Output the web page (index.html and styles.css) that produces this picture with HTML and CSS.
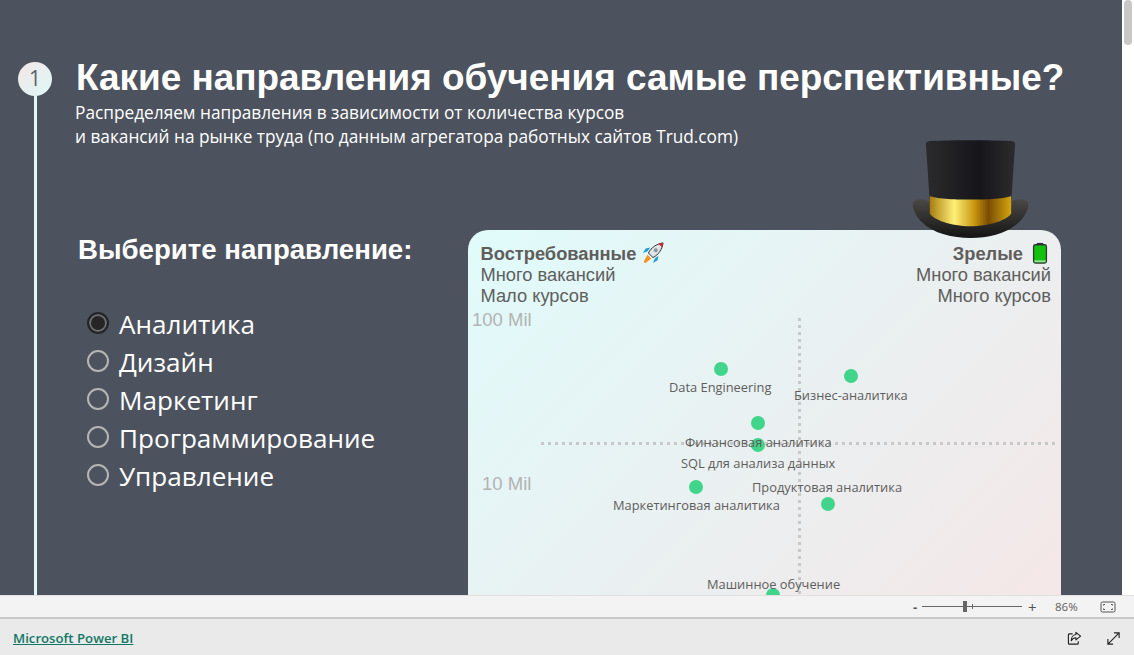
FILE: index.html
```html
<!DOCTYPE html>
<html lang="ru">
<head>
    <meta charset="UTF-8">
    <meta name="viewport" content="width=device-width, initial-scale=1.0">
    <title>Microsoft Power BI</title>
    <link rel="stylesheet" href="styles.css">
</head>
<body>
    <div class="report">
        <main class="page">
            <div class="timeline">
                <div class="step">1</div>
                <div class="step-line"></div>
            </div>
            <div class="content">
                <h1 class="title">Какие направления обучения самые перспективные?</h1>
                <p class="subtitle">Распределяем направления в зависимости от количества курсов<br>и вакансий на рынке труда (по данным агрегатора работных сайтов Trud.com)</p>
                <div class="columns">
                    <section class="filter">
                        <h2 class="filter-title">Выберите направление:</h2>
                        <ul class="choices">
                            <li class="choice"><span class="radio radio-on"></span>Аналитика</li>
                            <li class="choice"><span class="radio"></span>Дизайн</li>
                            <li class="choice"><span class="radio"></span>Маркетинг</li>
                            <li class="choice"><span class="radio"></span>Программирование</li>
                            <li class="choice"><span class="radio"></span>Управление</li>
                        </ul>
                    </section>
                    <section class="chart">
                        <svg class="hat" viewBox="0 0 120 102" preserveAspectRatio="none" aria-hidden="true">
                            <defs>
                                <linearGradient id="crown" x1="0" x2="1" y1="0" y2="0">
                                    <stop offset="0" stop-color="#2b2b2d"/>
                                    <stop offset="0.6" stop-color="#15151a"/>
                                    <stop offset="1" stop-color="#2c2c2e"/>
                                </linearGradient>
                                <linearGradient id="brim" x1="0" x2="0" y1="0" y2="1">
                                    <stop offset="0" stop-color="#4a4946"/>
                                    <stop offset="1" stop-color="#141414"/>
                                </linearGradient>
                                <linearGradient id="band" x1="0" x2="1" y1="0" y2="0">
                                    <stop offset="0" stop-color="#a87c10"/>
                                    <stop offset="0.3" stop-color="#fdf077"/>
                                    <stop offset="0.55" stop-color="#c8950f"/>
                                    <stop offset="0.72" stop-color="#7a4c04"/>
                                    <stop offset="1" stop-color="#d4a50f"/>
                                </linearGradient>
                            </defs>
                            <path fill="url(#brim)" d="M3 62c5-3 14-2 19 3 10 6 66 6 76 0 5-5 14-6 19-3 3 3 1 12-7 21-13 13-32 17-50 17s-37-4-50-17C2 74 0 65 3 62z"/>
                            <path fill="url(#crown)" d="M15 4c0-2 2-3 4-3 22-1 60-1 82 0 2 0 4 1 4 3l-4 60c-10 8-72 8-82 0z"/>
                            <path fill="url(#band)" d="M19 57c10 5 72 5 82 0l0 18c-3 6-21 13-41 13S22 81 19 75z"/>
                        </svg>
                        <div class="quadrant-row">
                            <div class="quadrant">
                                <strong class="quadrant-name">Востребованные
                                    <svg class="emoji" viewBox="0 0 24 24" aria-hidden="true">
                                        <path fill="#f7931e" d="M6 14l4 4-6 5c-1 0-2-1-2-2z"/>
                                        <path fill="#1d9bd8" d="M6 10l-5 2 3-5 5-1zM14 18l-2 5 5-3 1-5z"/>
                                        <path fill="#dfe6ea" stroke="#222" stroke-width="1" d="M7 12C10 6 16 2 23 1c-1 7-5 13-11 16z"/>
                                        <path fill="#d8232a" d="M18 2l5-1-1 5z"/>
                                        <circle cx="15" cy="9" r="2.2" fill="#8a979e"/>
                                    </svg>
                                </strong>
                                <span>Много вакансий</span>
                                <span>Мало курсов</span>
                            </div>
                            <div class="quadrant quadrant-right">
                                <strong class="quadrant-name">Зрелые
                                    <svg class="emoji" viewBox="0 0 24 24" aria-hidden="true">
                                        <rect x="8.500" y="1" width="7" height="3" fill="#333"/>
                                        <rect x="5" y="3" width="14" height="20" rx="2" fill="#13c20f" stroke="#333" stroke-width="1.4"/>
                                        <rect x="6" y="20" width="12" height="2" fill="#9adf98"/>
                                    </svg>
                                </strong>
                                <span>Много вакансий</span>
                                <span>Много курсов</span>
                            </div>
                        </div>

                        <span class="axis-label axis-top">100 Mil</span>
                        <span class="axis-label axis-mid">10 Mil</span>
                        <div class="guide guide-v"></div>
                        <div class="guide guide-h"></div>

                        <span class="dot dot-1"></span>
                        <span class="dot dot-2"></span>
                        <span class="dot dot-3"></span>
                        <span class="dot dot-4"></span>
                        <span class="dot dot-5"></span>
                        <span class="dot dot-6"></span>
                        <span class="dot dot-7"></span>

                        <span class="dot-label label-1">Data Engineering</span>
                        <span class="dot-label label-2">Бизнес-аналитика</span>
                        <span class="dot-label label-3">Финансовая аналитика</span>
                        <span class="dot-label label-4">SQL для анализа данных</span>
                        <span class="dot-label label-5">Продуктовая аналитика</span>
                        <span class="dot-label label-6">Маркетинговая аналитика</span>
                        <span class="dot-label label-7">Машинное обучение</span>
                    </section>
                </div>
            </div>
        </main>
        <div class="scrollbar"><div class="scroll-thumb"></div></div>
    </div>

    <div class="zoombar">
        <span class="zoom-sign">-</span>
        <div class="slider"><span class="slider-tick"></span><span class="slider-knob"></span></div>
        <span class="zoom-sign zoom-plus">+</span>
        <span class="zoom-value">86%</span>
        <svg class="fit-icon" viewBox="0 0 16 12" aria-hidden="true">
            <rect x="1" y="1" width="14" height="10" rx="1.5" fill="none" stroke="#555" stroke-width="1"/>
            <path fill="none" stroke="#555" d="M3.500 4.500V3.500H5M11 3.500h1.500v1M3.500 7.500v1H5M11 8.500h1.500v-1"/>
        </svg>
    </div>

    <footer class="footer">
        <a class="brand" href="#">Microsoft Power BI</a>
        <div class="footer-icons">
            <svg class="footer-icon" viewBox="0 0 16 16" aria-hidden="true">
                <path fill="none" stroke="#222" stroke-width="1.2" d="M6 3H2.500C1.700 3 1.500 3.500 1.500 4v9c0 .7.4 1 1 1h8.500c.6 0 1-.4 1-1v-2"/>
                <path fill="none" stroke="#222" stroke-width="1.2" stroke-linejoin="round" d="M9.500 1.500L14.500 5.500 9.500 9.500V7.200C7 7.200 5.500 8.500 4.500 10.500 4.500 7 6.500 4 9.500 3.800z"/>
            </svg>
            <svg class="footer-icon" viewBox="0 0 16 16" aria-hidden="true">
                <path fill="none" stroke="#222" stroke-width="1.2" d="M2 14L14 2M8.500 2H14V7.500M2 8.500V14H7.500"/>
            </svg>
        </div>
    </footer>
</body>
</html>
```
FILE: styles.css
```css
* {
    box-sizing: border-box;
}
html, body {
    height: 100%;
}
body {
    margin: 0;
    height: 655px;
    display: flex;
    flex-direction: column;
    overflow: hidden;
    font-family: "Open Sans", "Noto Sans", sans-serif;
    background: #eaeaea;
}

.report {
    height: 595px;
    display: flex;
    flex: none;
    overflow: hidden;
}
.page {
    flex: 1;
    display: flex;
    background: #4d535e;
    color: white;
    padding: 59px 0 0 18px;
    overflow: hidden;
}
.scrollbar {
    width: 12px;
    background: white;
    padding: 0 2px;
}
.scroll-thumb {
    height: 45px;
    background: #c8c8c8;
    border-radius: 4px;
}

.timeline {
    width: 34px;
    padding-top: 3px;
    display: flex;
    flex-direction: column;
    align-items: center;
    flex: none;
}
.step {
    width: 34px;
    height: 34px;
    flex: none;
    border-radius: 50%;
    background: linear-gradient(135deg, #f2e6e6, #e0f8f8);
    color: #5c6068;
    font-size: 21px;
    line-height: 32px;
    text-align: center;
}
.step-line {
    width: 3px;
    flex: 1;
    background: #e0f8f8;
}

.content {
    flex: 1;
    padding-left: 24px;
    min-width: 0;
}
.title {
    margin: 0;
    font-family: "Liberation Sans", Arial, sans-serif;
    font-size: 36.9px;
    line-height: 38px;
    font-weight: bold;
    white-space: nowrap;
}
.subtitle {
    margin: 4px 0 0 -1px;
    font-size: 17.25px;
    line-height: 24px;
}

.columns {
    display: flex;
    margin-top: 81px;
}
.filter {
    width: 392px;
    flex: none;
    padding-left: 2px;
}
.filter-title {
    margin: 4px 0 0;
    font-family: "Liberation Sans", Arial, sans-serif;
    font-size: 27.6px;
    line-height: 32px;
    font-weight: bold;
}
.choices {
    list-style: none;
    margin: 39px 0 0;
    padding: 0 0 0 9px;
}
.choice {
    display: flex;
    align-items: center;
    gap: 10px;
    height: 38px;
    font-size: 26.1px;
}
.radio {
    width: 22px;
    height: 22px;
    margin-top: -2px;
    flex: none;
    border-radius: 50%;
    border: 2px solid #b5b5b5;
}
.radio-on {
    border-color: #252525;
    background: #252525;
    box-shadow: inset 0 0 0 2px #6b6f76;
}

.chart {
    position: relative;
    width: 593px;
    height: 420px;
    flex: none;
    border-radius: 20px;
    background: linear-gradient(135deg, #e0fbfb 0%, #ebeff0 55%, #f6e6e6 100%);
    color: #605e5c;
}
.hat {
    position: absolute;
    right: 31px;
    top: -90px;
    width: 119px;
    height: 100px;
}
.quadrant-row {
    display: flex;
    justify-content: space-between;
    padding: 12px 10px 0 12.5px;
    font-family: "Liberation Sans", Arial, sans-serif;
    font-size: 18.3px;
    line-height: 21px;
}
.quadrant {
    display: flex;
    flex-direction: column;
}
.quadrant-right {
    text-align: right;
    align-items: flex-end;
}
.quadrant-name {
    display: flex;
    align-items: center;
    gap: 6px;
}
.emoji {
    width: 22px;
    height: 22px;
}

.axis-label {
    position: absolute;
    font-family: "Liberation Sans", Arial, sans-serif;
    font-size: 18.5px;
    line-height: 20px;
    color: #b3b3b3;
}
.axis-top { left: 4px; top: 80px; }
.axis-mid { left: 14px; top: 244px; }

.guide {
    position: absolute;
}
.guide-v {
    left: 330px;
    top: 88px;
    width: 3px;
    height: 340px;
    background: repeating-linear-gradient(to bottom, #c8c8c8 0 3px, transparent 3px 7px);
}
.guide-h {
    left: 73px;
    right: 5px;
    top: 212px;
    height: 3px;
    background: repeating-linear-gradient(to right, #c8c8c8 0 3px, transparent 3px 7px);
}

.dot {
    position: absolute;
    width: 14px;
    height: 14px;
    border-radius: 50%;
    background: #41d58b;
}
.dot-1 { left: 246px; top: 132px; }
.dot-2 { left: 376px; top: 139px; }
.dot-3 { left: 283px; top: 186px; }
.dot-4 { left: 283px; top: 208px; }
.dot-5 { left: 221px; top: 250px; }
.dot-6 { left: 353px; top: 267px; }
.dot-7 { left: 298px; top: 358px; }

.dot-label {
    position: absolute;
    font-size: 12.85px;
    line-height: 16px;
    white-space: nowrap;
    color: #605e5c;
}
.label-1 { left: 201px; top: 149px; }
.label-2 { left: 326px; top: 157px; }
.label-3 { left: 217px; top: 204px; }
.label-4 { left: 213px; top: 225px; }
.label-5 { left: 284px; top: 249px; }
.label-6 { left: 145px; top: 267px; }
.label-7 { left: 239px; top: 346px; }

.zoombar {
    height: 24px;
    flex: none;
    display: flex;
    align-items: center;
    justify-content: flex-end;
    padding-right: 18px;
    background: #f3f3f3;
    border-top: 1px solid #e0e0e0;
    border-bottom: 2px solid #c8c8c8;
    font-size: 11.5px;
    color: #605e5c;
}
.zoom-sign {
    font-size: 13px;
    font-weight: bold;
    color: #555;
    width: 9px;
}
.zoom-plus {
    font-weight: normal;
    font-size: 15px;
    margin-left: 6px;
}
.slider {
    position: relative;
    width: 100px;
    height: 1px;
    background: #666;
}
.slider-tick {
    position: absolute;
    left: 50px;
    top: -2px;
    width: 1px;
    height: 5px;
    background: #666;
}
.slider-knob {
    position: absolute;
    left: 41px;
    top: -5px;
    width: 4px;
    height: 11px;
    background: #666;
}
.zoom-value {
    margin-left: 18px;
    width: 33px;
}
.fit-icon {
    width: 16px;
    height: 12px;
    margin-left: 12px;
}

.footer {
    flex: 1;
    display: flex;
    align-items: center;
    justify-content: space-between;
    padding: 2px 13px 0 13px;
    background: #eaeaea;
}
.brand {
    font-size: 13.2px;
    color: #117865;
    font-weight: 600;
}
.footer-icons {
    display: flex;
    gap: 24px;
}
.footer-icon {
    width: 15px;
    height: 15px;
}
```
